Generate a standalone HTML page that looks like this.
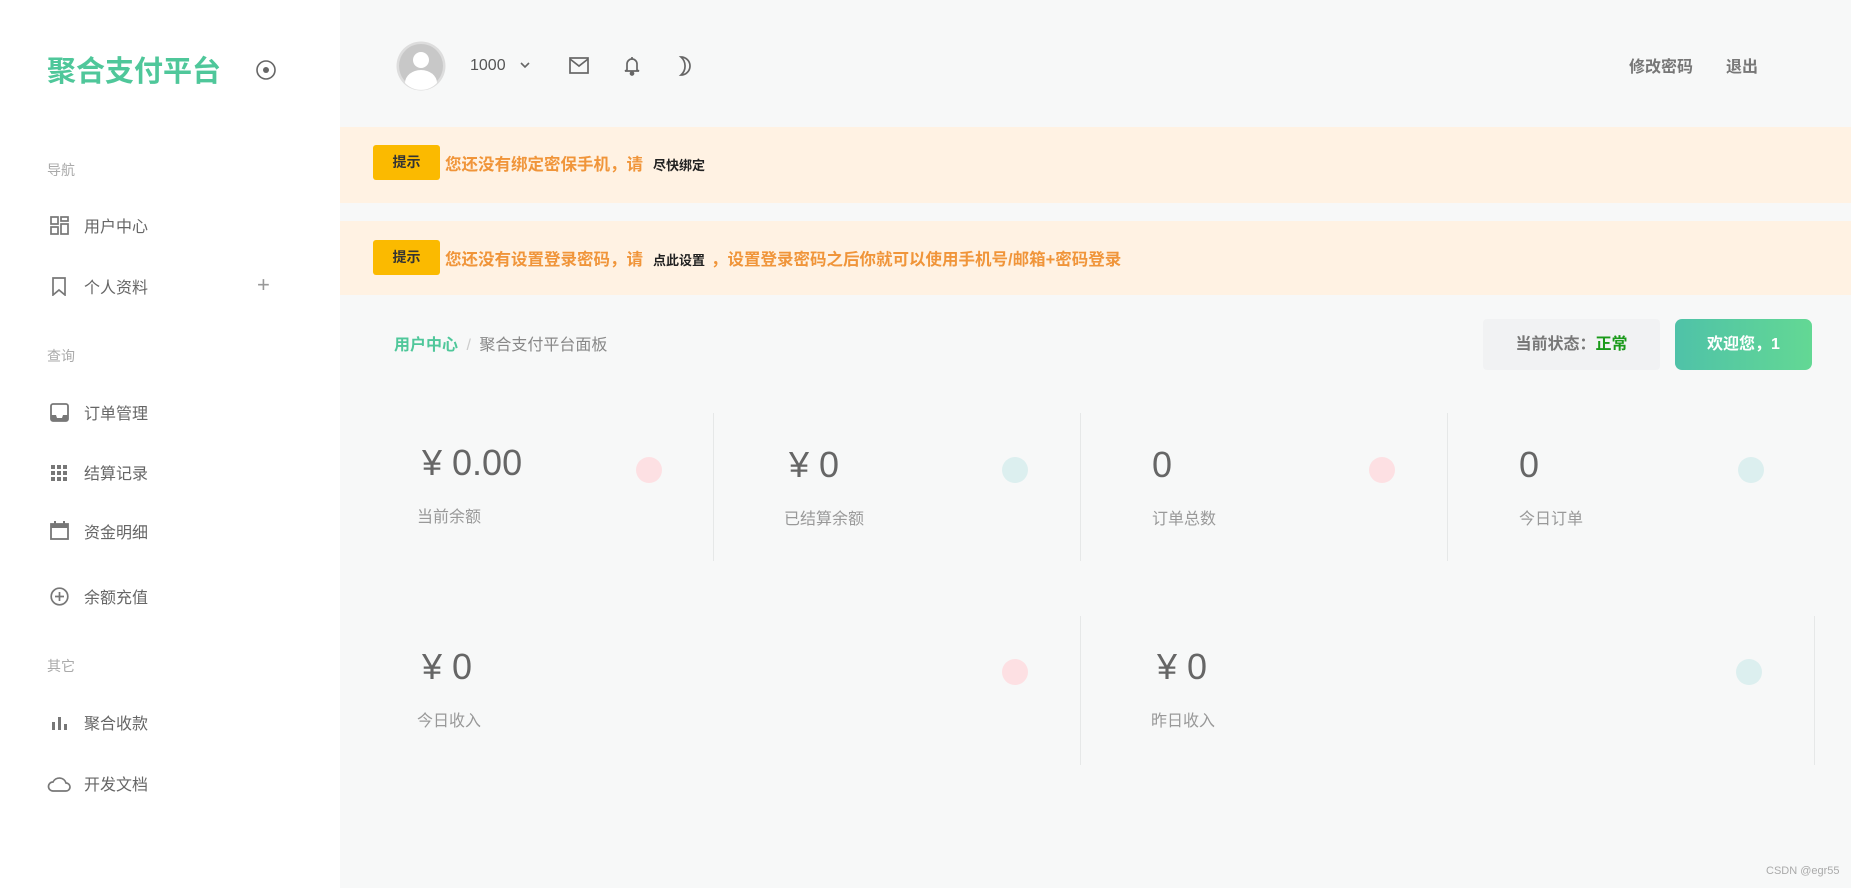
<!DOCTYPE html>
<html><head><meta charset="utf-8"><style>
*{margin:0;padding:0;box-sizing:border-box}
body{width:1851px;height:888px;overflow:hidden;background:#f7f8f8;font-family:"Liberation Sans","Noto Sans CJK SC",sans-serif;position:relative;color:#666}
.a{position:absolute;white-space:nowrap}
#side{position:absolute;left:0;top:0;width:340px;height:888px;background:#fff}
.logo{left:47px;top:48px;font-size:29px;font-weight:bold;color:#4fc79a}
.sec{left:47px;font-size:14px;color:#aaa}
.nav{left:84px;font-size:16px;color:#666;margin-top:-2px}
.ic{left:50px;width:19px;height:19px}
.ban{position:absolute;left:340px;width:1511px;background:#fff2e3}
.btn{position:absolute;left:33px;width:67px;height:35px;background:#fbba00;border-radius:3px;color:#333;font-size:14px;text-align:center;line-height:35px;font-weight:bold}
.bt{position:absolute;left:105px;font-size:16.5px;color:#f0953a;font-weight:bold}
.bt b{color:#222;font-size:13px;font-weight:bold;margin:0 6px 0 10px}
.val{font-size:36px;color:#666}
.lbl{font-size:16px;color:#999}
.dot{width:26px;height:26px;border-radius:50%}
.div{width:1px;background:#e6e8e8}
</style></head><body>
<div id="side">
<div class="a logo">聚合支付平台</div>
<svg class="a" style="left:255px;top:59px" width="22" height="22" viewBox="0 0 22 22"><circle cx="11" cy="11" r="9" fill="none" stroke="#666" stroke-width="1.6"/><circle cx="11" cy="11" r="3" fill="#666"/></svg>
<div class="a sec" style="top:160px">导航</div>
<svg class="a ic" style="top:216px" viewBox="0 0 19 19" fill="none" stroke="#777" stroke-width="1.7"><rect x="1" y="1" width="7" height="7"/><rect x="11" y="1" width="7" height="4"/><rect x="1" y="11" width="7" height="7"/><rect x="11" y="8" width="7" height="10"/></svg>
<div class="a nav" style="top:215px">用户中心</div>
<svg class="a ic" style="top:277px" viewBox="0 0 19 19" fill="none" stroke="#777" stroke-width="1.7"><path d="M3 1h12v17l-6-5-6 5z"/></svg>
<div class="a nav" style="top:276px">个人资料</div>
<div class="a" style="left:257px;top:272px;font-size:22px;color:#999">+</div>
<div class="a sec" style="top:346px">查询</div>
<svg class="a ic" style="top:403px" viewBox="0 0 19 19"><rect x="1" y="1" width="17" height="17" rx="2" fill="none" stroke="#777" stroke-width="1.8"/><path d="M1 12h5l1 3h5l1-3h5v6H1z" fill="#777"/></svg>
<div class="a nav" style="top:402px">订单管理</div>
<svg class="a ic" style="top:463px" viewBox="0 0 19 19" fill="#777"><rect x="1" y="2" width="4" height="4"/><rect x="7" y="2" width="4" height="4"/><rect x="13" y="2" width="4" height="4"/><rect x="1" y="8" width="4" height="4"/><rect x="7" y="8" width="4" height="4"/><rect x="13" y="8" width="4" height="4"/><rect x="1" y="14" width="4" height="4"/><rect x="7" y="14" width="4" height="4"/><rect x="13" y="14" width="4" height="4"/></svg>
<div class="a nav" style="top:462px">结算记录</div>
<svg class="a ic" style="top:521px" viewBox="0 0 19 19"><rect x="1" y="3" width="17" height="15" fill="none" stroke="#777" stroke-width="1.8"/><rect x="1" y="3" width="17" height="4" fill="#777"/><rect x="4" y="0" width="2" height="4" fill="#777"/><rect x="13" y="0" width="2" height="4" fill="#777"/></svg>
<div class="a nav" style="top:521px">资金明细</div>
<svg class="a ic" style="top:587px" viewBox="0 0 19 19" fill="none" stroke="#777" stroke-width="1.7"><circle cx="9.5" cy="9.5" r="8.3"/><path d="M9.5 5v9M5 9.5h9"/></svg>
<div class="a nav" style="top:586px">余额充值</div>
<div class="a sec" style="top:656px">其它</div>
<svg class="a ic" style="top:713px" viewBox="0 0 19 19" fill="#777"><rect x="2" y="9" width="3" height="8"/><rect x="8" y="4" width="3" height="13"/><rect x="14" y="11" width="3" height="6"/></svg>
<div class="a nav" style="top:712px">聚合收款</div>
<svg class="a" style="left:47px;top:775px" width="24" height="18" viewBox="0 0 24 18" fill="none" stroke="#777" stroke-width="1.7"><path d="M6 16h13a4 4 0 0 0 0-8 7 7 0 0 0-13-1 4.5 4.5 0 0 0 0 9z"/></svg>
<div class="a nav" style="top:773px">开发文档</div>
</div>
<svg class="a" style="left:396px;top:41px" width="50" height="50" viewBox="0 0 50 50"><circle cx="25" cy="25" r="24.5" fill="#ddd"/><circle cx="25" cy="25" r="22" fill="#c8c8c8"/><circle cx="25" cy="19" r="8" fill="#fff"/><path d="M9 42a16 13 0 0 1 32 0 22 22 0 0 1-32 0z" fill="#fff"/></svg>
<div class="a" style="left:470px;top:57px;font-size:16px;color:#555">1000</div>
<svg class="a" style="left:519px;top:60px" width="12" height="10" viewBox="0 0 12 10" fill="none" stroke="#666" stroke-width="1.6"><path d="M2 3l4 4 4-4"/></svg>
<svg class="a" style="left:569px;top:57px" width="20" height="17" viewBox="0 0 20 17" fill="none" stroke="#666" stroke-width="1.7"><rect x="1" y="1" width="18" height="15"/><path d="M1 2l9 7 9-7"/></svg>
<svg class="a" style="left:623px;top:55px" width="18" height="21" viewBox="0 0 18 21" fill="none" stroke="#666" stroke-width="1.7"><path d="M9 2v2M4 15V9a5 5 0 0 1 10 0v6l2 1H2z"/><circle cx="9" cy="18.5" r="1.5" fill="#666"/></svg>
<svg class="a" style="left:678px;top:55px" width="16" height="22" viewBox="0 0 16 22" fill="none" stroke="#666" stroke-width="1.7"><path d="M3 2a9 9 0 0 1 0 18 12 12 0 0 0 0-18z"/></svg>
<div class="a" style="left:1629px;top:53px;font-size:16px;font-weight:bold;color:#777">修改密码</div>
<div class="a" style="left:1726px;top:53px;font-size:16px;font-weight:bold;color:#777">退出</div>
<div class="ban" style="top:127px;height:76px"><div class="btn" style="top:18px">提示</div><div class="bt" style="top:24px">您还没有绑定密保手机，请<b>尽快绑定</b></div></div>
<div class="ban" style="top:221px;height:74px"><div class="btn" style="top:19px">提示</div><div class="bt" style="top:25px">您还没有设置登录密码，请<b>点此设置</b>，设置登录密码之后你就可以使用手机号/邮箱+密码登录</div></div>
<div class="a" style="left:394px;top:331px;font-size:16px;font-weight:bold;color:#4fc79a">用户中心 <span style="color:#ccc;font-weight:normal;margin:0 4px">/</span> <span style="color:#888;font-weight:normal">聚合支付平台面板</span></div>
<div class="a" style="left:1483px;top:319px;width:177px;height:51px;background:#f1f2f3;border-radius:4px;text-align:center;line-height:51px;font-size:16px;font-weight:bold;color:#777">当前状态：<span style="color:#1a9a1a">正常</span></div>
<div class="a" style="left:1675px;top:319px;width:137px;height:51px;background:linear-gradient(90deg,#4fc2a8,#63d894);border-radius:7px;text-align:center;line-height:51px;font-size:16px;font-weight:bold;color:#fff">欢迎您，1</div>
<div class="a div" style="left:713px;top:413px;height:148px"></div>
<div class="a div" style="left:1080px;top:413px;height:148px"></div>
<div class="a div" style="left:1447px;top:413px;height:148px"></div>
<div class="a div" style="left:1080px;top:616px;height:149px"></div>
<div class="a div" style="left:1814px;top:616px;height:149px"></div>
<div class="a val" style="left:422px;top:442px">¥ 0.00</div><div class="a lbl" style="left:417px;top:503px">当前余额</div><div class="a dot" style="left:636px;top:457px;background:#fde0e3"></div>
<div class="a val" style="left:789px;top:444px">¥ 0</div><div class="a lbl" style="left:784px;top:505px">已结算余额</div><div class="a dot" style="left:1002px;top:457px;background:#dcefef"></div>
<div class="a val" style="left:1152px;top:444px">0</div><div class="a lbl" style="left:1152px;top:505px">订单总数</div><div class="a dot" style="left:1369px;top:457px;background:#fde0e3"></div>
<div class="a val" style="left:1519px;top:444px">0</div><div class="a lbl" style="left:1519px;top:505px">今日订单</div><div class="a dot" style="left:1738px;top:457px;background:#dcefef"></div>
<div class="a val" style="left:422px;top:646px">¥ 0</div><div class="a lbl" style="left:417px;top:707px">今日收入</div><div class="a dot" style="left:1002px;top:659px;background:#fde0e3"></div>
<div class="a val" style="left:1157px;top:646px">¥ 0</div><div class="a lbl" style="left:1151px;top:707px">昨日收入</div><div class="a dot" style="left:1736px;top:659px;background:#dcefef"></div>
<div class="a" style="left:1766px;top:865px;font-size:11px;color:#aaa">CSDN @egr55</div>
</body></html>
